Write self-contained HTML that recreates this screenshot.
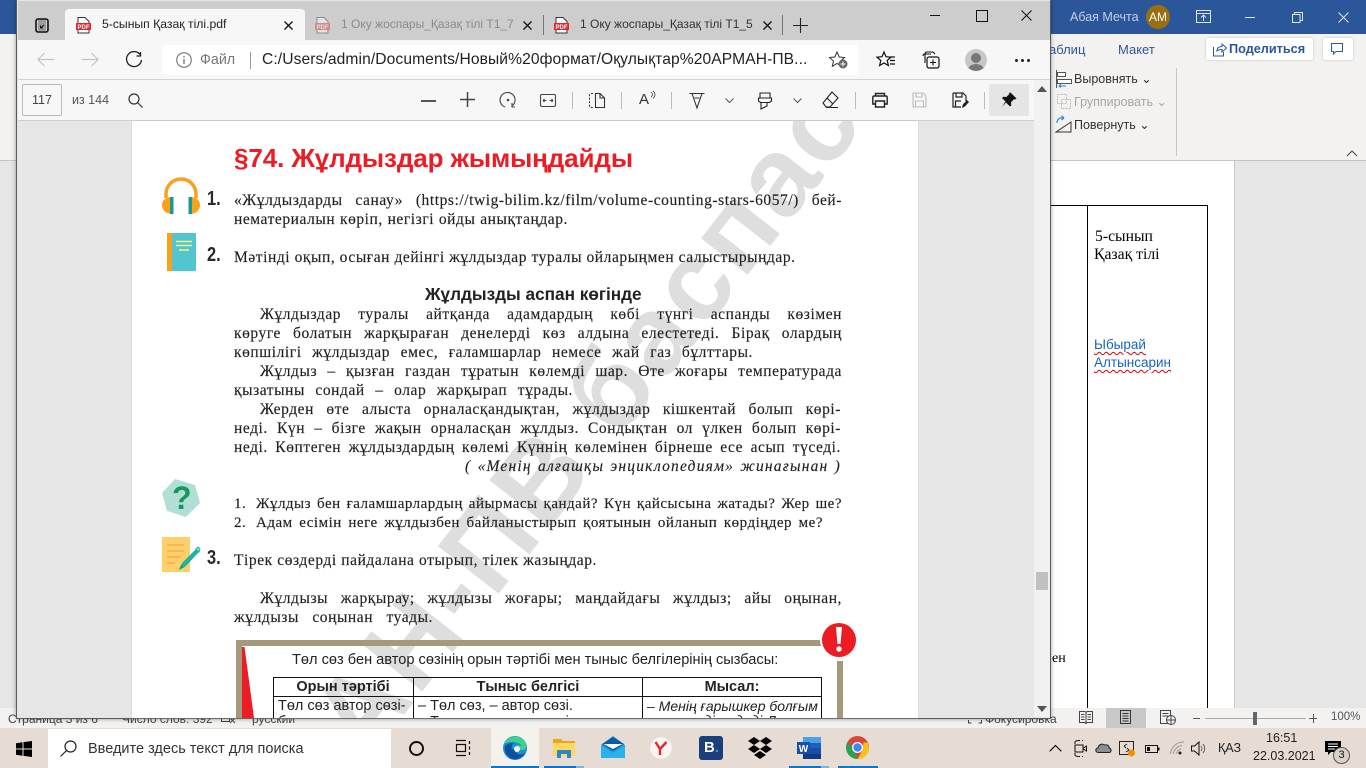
<!DOCTYPE html>
<html><head><meta charset="utf-8">
<style>
html,body{margin:0;padding:0}
body{position:relative;width:1366px;height:768px;overflow:hidden;background:#e6e6e6;font-family:"Liberation Sans",sans-serif}
.a{position:absolute}
.t{position:absolute;white-space:nowrap}
svg{position:absolute;overflow:visible}
.l{position:absolute;white-space:nowrap;font-family:"Liberation Serif",serif;font-size:15.5px;letter-spacing:.56px;line-height:19px;height:19px;margin-top:-1px;color:#231f20;text-align:justify;text-align-last:justify;-webkit-text-stroke:.15px #231f20}
.m{font-size:15px;letter-spacing:.5px;margin-top:0}
.n{position:absolute;font-family:"Liberation Sans",sans-serif;font-weight:bold;font-size:20px;color:#2a2a2a;line-height:22px;transform:scaleX(.82);transform-origin:left}
.c{position:absolute;font-size:14.5px;line-height:18px;color:#222;white-space:nowrap}
</style></head><body>

<!-- WORD behind -->
<div class="a" style="left:0;top:0;width:1366px;height:34px;background:#2b579a"></div>
<div class="a" style="left:0;top:34px;width:1366px;height:126px;background:#f3f2f1"></div>
<div class="a" style="left:0;top:160px;width:1366px;height:1px;background:#c6c6c6"></div>
<div class="a" style="left:1050px;top:161px;width:184px;height:547px;background:#fff"></div>
<div class="a" style="left:1050px;top:205px;width:158px;height:1px;background:#000"></div>
<div class="a" style="left:1087px;top:205px;width:1px;height:503px;background:#000"></div>
<div class="a" style="left:1207px;top:205px;width:1px;height:503px;background:#000"></div>
<div class="t" style="left:1095px;top:227px;font:15.7px/19px 'Liberation Serif',serif;color:#000">5-сынып</div>
<div class="t" style="left:1094px;top:245px;font:15.7px/19px 'Liberation Serif',serif;color:#000">Қазақ тілі</div>
<div class="t" style="left:1094px;top:336px;font:13.5px/18px 'Liberation Sans',sans-serif;color:#1565c0;text-decoration:underline wavy #d00 1px;text-underline-offset:2px">Ыбырай</div>
<div class="t" style="left:1094px;top:354px;font:13.5px/18px 'Liberation Sans',sans-serif;color:#1565c0;text-decoration:underline wavy #d00 1px;text-underline-offset:2px">Алтынсарин</div>
<div class="t" style="left:1052px;top:650px;font:14px/18px 'Liberation Serif',serif;color:#000">ен</div>

<div class="t" style="left:1070px;top:10px;font-size:12.5px;color:#c3d0e6">Абая Мечта</div>
<div class="a" style="left:1146px;top:5px;width:24px;height:24px;border-radius:50%;background:#9a6f10;color:#fff;font-size:12px;line-height:24px;text-align:center">AM</div>
<svg style="left:1196px;top:10px" width="16" height="14"><rect x=".5" y=".5" width="14" height="12" fill="none" stroke="#dbe4f2"/><path d="M.5 3.5h14M7.5 11V5.500M5 7.500l2.500-2.500L10 7.500" fill="none" stroke="#dbe4f2"/></svg>
<div class="a" style="left:1245px;top:17px;width:10px;height:1px;background:#dbe4f2"></div>
<svg style="left:1292px;top:12px" width="11" height="11"><path d="M.5 2.500h7.500v8H.5zM2.500 2.500V.5h8v8H8" fill="none" stroke="#dbe4f2"/></svg>
<svg style="left:1338px;top:12px" width="11" height="11"><path d="M.5.5l10 10M10.500.5l-10 10" stroke="#dbe4f2"/></svg>

<div class="t" style="left:1049px;top:42px;font-size:13px;color:#2b579a">аблиц</div>
<div class="t" style="left:1118px;top:42px;font-size:13px;color:#2b579a">Макет</div>
<div class="a" style="left:1206px;top:38px;width:107px;height:22px;background:#fff;box-shadow:0 0 2px #bbb;border-radius:2px"></div>
<svg style="left:1212px;top:42px" width="16" height="15"><path d="M1.500 5v9h10V10M5 9c0-3 2-4.500 5-4.500V2l4.500 4L10 10V7.500C7.500 7.500 6 8 5 9z" fill="none" stroke="#2b579a"/></svg>
<div class="t" style="left:1229px;top:42px;font-size:12.700px;font-weight:bold;color:#2b579a">Поделиться</div>
<div class="a" style="left:1323px;top:38px;width:30px;height:22px;background:#fff;box-shadow:0 0 2px #bbb;border-radius:2px"></div>
<svg style="left:1331px;top:43px" width="14" height="14"><path d="M.5.5h11v8H5L2.500 11V8.500h-2z" fill="none" stroke="#2b579a"/></svg>

<svg style="left:1055px;top:70px" width="18" height="18"><path d="M1.500 0v18" stroke="#555"/><rect x="2.500" y="2.500" width="8" height="4" fill="#fff" stroke="#555"/><rect x="2.500" y="9.500" width="14" height="4" fill="#fff" stroke="#555"/><path d="M11 16H4l2-2M4 16l2 1.500" fill="none" stroke="#2b88d8"/></svg>
<div class="t" style="left:1074px;top:71px;font-size:12.500px;color:#333">Выровнять ⌄</div>
<svg style="left:1056px;top:93px" width="16" height="17"><rect x="1.500" y="1.500" width="9" height="9" fill="none" stroke="#bbb" stroke-dasharray="2 1"/><rect x="5.500" y="6.500" width="9" height="9" fill="none" stroke="#bbb" stroke-dasharray="2 1"/></svg>
<div class="t" style="left:1074px;top:94px;font-size:12.500px;color:#a6a6a6">Группировать ⌄</div>
<svg style="left:1055px;top:115px" width="18" height="18"><path d="M1 17L16 7v10z" fill="none" stroke="#333"/><path d="M2 8c0-4 3-6 7-5M9 3L6.500.5M9 3L6.500 5" fill="none" stroke="#2b88d8" stroke-width="1.200"/></svg>
<div class="t" style="left:1074px;top:117px;font-size:12.500px;color:#333">Повернуть ⌄</div>
<div class="a" style="left:1176px;top:68px;width:1px;height:88px;background:#c8c6c4"></div>
<svg style="left:1346px;top:150px" width="12" height="7"><path d="M1 6l5-5 5 5" fill="none" stroke="#444"/></svg>
<div class="a" style="left:1234px;top:161px;width:1px;height:547px;background:#c8c8c8"></div>

<!-- Word status -->
<div class="a" style="left:0;top:708px;width:1366px;height:20px;background:#f3f2f1"></div>
<div class="t" style="left:8px;top:712px;font-size:12px;color:#444">Страница 3 из 6</div>
<div class="t" style="left:122px;top:712px;font-size:12px;color:#444">Число слов: 392</div>
<svg style="left:221px;top:712px" width="15" height="12"><rect x=".5" y=".5" width="8" height="9" fill="none" stroke="#444"/><path d="M9 6l5 5M14 6l-5 5" stroke="#444"/></svg>
<div class="t" style="left:252px;top:712px;font-size:12px;color:#444">русский</div>
<svg style="left:968px;top:712px" width="14" height="12"><path d="M.5 3V.5h3M10.500.5h3V3M.5 8v3h3M13.500 8v3h-3" fill="none" stroke="#444"/></svg>
<div class="t" style="left:985px;top:712px;font-size:12px;color:#444">Фокусировка</div>
<div class="a" style="left:1106px;top:708px;width:40px;height:20px;background:#c8c8c8"></div>
<svg style="left:1079px;top:710px" width="14" height="14"><path d="M.5 1.500h5.500l1 1 1-1h5.500v11H8l-1 1-1-1H.5zM7 2.500v10M2 4.500h3.500M2 7h3.500M2 9.500h3.500M8.500 4.500H12M8.500 7H12M8.500 9.500H12" fill="none" stroke="#444"/></svg>
<svg style="left:1120px;top:710px" width="11" height="14"><path d="M.5.500h10v13H.5zM2.500 3.500h6M2.500 6h6M2.500 8.500h6M2.500 11h6" fill="none" stroke="#333"/></svg>
<svg style="left:1160px;top:710px" width="16" height="15"><path d="M.5.500h10v13H.5zM2.500 3.500h6M2.500 6h6" fill="none" stroke="#444"/><circle cx="11" cy="10" r="4.500" fill="#f3f2f1" stroke="#444"/><path d="M6.500 10h9M11 5.500v9" stroke="#444"/></svg>
<div class="a" style="left:1193px;top:718px;width:7px;height:1px;background:#555"></div>
<div class="a" style="left:1205px;top:718px;width:101px;height:1px;background:#aaa"></div>
<div class="a" style="left:1253px;top:712px;width:4px;height:13px;background:#666"></div>
<div class="a" style="left:1309px;top:718px;width:8px;height:1px;background:#555"></div>
<div class="a" style="left:1313px;top:714px;width:1px;height:9px;background:#555"></div>
<div class="t" style="left:1331px;top:711px;font-size:11.500px;color:#555">100%</div>

<!-- Taskbar -->
<div class="a" style="left:0;top:728px;width:1366px;height:40px;background:#e7dcd4"></div>
<svg style="left:16px;top:741px" width="16" height="16"><path d="M0 2.200L6.500 1.300V7.500H0zM7.500 1.100L16 0V7.500H7.500zM0 8.500H6.500V14.700L0 13.800zM7.500 8.500H16V16L7.500 14.900z" fill="#000"/></svg>
<div class="a" style="left:48px;top:729px;width:343px;height:39px;background:#fff"></div>
<svg style="left:60px;top:740px" width="17" height="17"><circle cx="10.500" cy="6.500" r="5.500" fill="none" stroke="#222" stroke-width="1.200"/><path d="M6.500 10.500L.5 16.500" stroke="#222" stroke-width="1.200"/></svg>
<div class="t" style="left:88px;top:741px;font-size:14.500px;color:#333">Введите здесь текст для поиска</div>
<div class="a" style="left:409px;top:741px;width:11px;height:11px;border:2.500px solid #111;border-radius:50%"></div>
<svg style="left:455px;top:740px" width="17" height="16"><path d="M1 .5h10M1 15.500h10M1.500 4.500h9v7h-9zM14.500 1v3M14.500 6.500v3M14.500 12v3" fill="none" stroke="#111" stroke-width="1.200"/></svg>
<div class="a" style="left:491px;top:728px;width:48px;height:40px;background:#f5f1ed"></div>
<div class="a" style="left:491px;top:766px;width:48px;height:2px;background:#0078d7"></div>
<div class="a" style="left:544px;top:766px;width:40px;height:2px;background:#0078d7"></div>
<div class="a" style="left:576px;top:766px;width:8px;height:2px;background:#76b5e6"></div>
<div class="a" style="left:789px;top:766px;width:32px;height:2px;background:#0078d7"></div>
<div class="a" style="left:821px;top:766px;width:8px;height:2px;background:#76b5e6"></div>
<div class="a" style="left:838px;top:766px;width:40px;height:2px;background:#0078d7"></div>
<!-- edge -->
<svg style="left:503px;top:736px" width="24" height="24"><circle cx="12" cy="12" r="12" fill="#1a8fd6"/><path d="M1 8C4 0 15-2 21 4c3 3 3 9 0 10H10c0-4 6-6 9-4-2-4-12-6-18-2z" fill="#3fcf8e"/><path d="M12 13c0 5 5 7 10 4-3 5-8 7-12 6-7-2-9-9-8-13 1 0 3-4 9-3-2 1-3 3-2 6z" fill="#0f4f9e"/><circle cx="14" cy="13" r="3" fill="#f5f1ed"/></svg>
<!-- explorer -->
<svg style="left:553px;top:738px" width="22" height="20"><path d="M0 1h8l2 2h12v4H0z" fill="#e6a817"/><rect y="5" width="22" height="13" fill="#ffd766"/><path d="M4 12h14v8h-4v-4H8v4H4z" fill="#2f86c9"/></svg>
<!-- mail -->
<svg style="left:601px;top:736px" width="24" height="24"><path d="M0 9L12 0l12 9v13H0z" fill="#1b9ad9"/><path d="M1 8L12 1l11 7-11 7z" fill="#0b5ca8"/><path d="M2.500 8h19L12 13z" fill="#fff"/><path d="M0 9l12 8 12-8v13H0z" fill="#28b3ec"/></svg>
<!-- yandex -->
<svg style="left:650px;top:737px" width="22" height="22"><circle cx="11" cy="11" r="11" fill="#f8f5f3" stroke="#ddd" stroke-width=".5"/><path d="M5.500 5l4.500 7v6M16.500 5L10 12" fill="none" stroke="#e8232a" stroke-width="2.400"/></svg>
<!-- B -->
<div class="a" style="left:699px;top:736px;width:24px;height:24px;background:#1c3f7c;border-radius:3px;color:#fff;font-weight:bold;font-size:15px;line-height:24px;padding-left:5px;box-sizing:border-box">B<span style="color:#1fa0e0">.</span></div>
<!-- dropbox -->
<svg style="left:748px;top:737px" width="24" height="22"><path d="M6 0l6 4-6 4-6-4zM18 0l6 4-6 4-6-4zM6 8l6 4-6 4-6-4zM18 8l6 4-6 4-6-4zM12 14l6 4-6 4-6-4z" fill="#000"/></svg>
<!-- word -->
<svg style="left:797px;top:736px" width="24" height="24"><rect x="6" y="1" width="18" height="22" fill="#1f5fbf"/><rect x="6" y="1" width="18" height="6" fill="#4aa0ea"/><rect x="6" y="12" width="18" height="6" fill="#1a4da3"/><rect x="6" y="18" width="18" height="5" fill="#123a82"/><rect y="6" width="13" height="12" fill="#174ea6"/><text x="6.500" y="16" text-anchor="middle" font-size="10" font-weight="bold" fill="#fff" font-family="Liberation Sans">W</text></svg>
<!-- chrome -->
<svg style="left:846px;top:736px" width="23" height="23"><circle cx="11.500" cy="11.500" r="11.500" fill="#db4437"/><path d="M11.500 23A11.500 11.500 0 0 1 1.500 6l6 5.500 4 11.500z" fill="#2ba24c"/><path d="M23 11.500A11.500 11.500 0 0 1 11.500 23l5-9 1-7.500h4z" fill="#fbc116"/><circle cx="11.500" cy="11.500" r="5.500" fill="#fff"/><circle cx="11.500" cy="11.500" r="4.200" fill="#4285f4"/></svg>

<!-- tray -->
<svg style="left:1049px;top:744px" width="13" height="8"><path d="M.7 7.300L6.500 1.500l5.800 5.800" fill="none" stroke="#111" stroke-width="1.200"/></svg>
<svg style="left:1074px;top:740px" width="14" height="17"><path d="M1 4v-2q0-1.500 5-1.500M1 13v2q0 1.500 5 1.500M8 0.500h1M8 16.500h1" fill="none" stroke="#111"/><rect x="1" y="5" width="8" height="7" fill="none" stroke="#111"/><path d="M9.500 8l3-2v5l-3-2" fill="none" stroke="#111"/></svg>
<svg style="left:1095px;top:741px" width="17" height="12"><path d="M3.500 11.500C0 11.500 0 7 3 7c0-3 4-5 6.500-3 3-1 5 1 4.500 3 3 .5 2.500 4.500 0 4.500z" fill="#8e8e8e" stroke="#222"/></svg>
<svg style="left:1119px;top:740px" width="16" height="17"><rect x=".5" y="1.500" width="14" height="13" fill="none" stroke="#222"/><path d="M5 6l3-2M5 6l2 2M10 10l-3 2M10 10l-2-2" stroke="#222" fill="none"/><circle cx="12.500" cy="13" r="3.500" fill="#f39000"/></svg>
<svg style="left:1145px;top:745px" width="15" height="8"><rect x=".5" y=".5" width="12" height="7" fill="none" stroke="#111"/><rect x="2" y="2" width="3" height="4" fill="#111"/><rect x="13" y="2.500" width="1.500" height="3" fill="#111"/></svg>
<svg style="left:1170px;top:741px" width="16" height="14"><path d="M.5 13A13 13 0 0 1 14 1M3.500 13A9.500 9.500 0 0 1 12 4.500M6.500 13A6 6 0 0 1 11 8" fill="none" stroke="#999"/><circle cx="10" cy="12" r="1.500" fill="#222"/></svg>
<svg style="left:1191px;top:741px" width="16" height="15"><path d="M.5 5h3L8 1v13L3.500 10h-3z" fill="none" stroke="#111"/><path d="M10 5a4 4 0 0 1 0 5M12 3a7 7 0 0 1 0 9" fill="none" stroke="#666"/></svg>
<div class="t" style="left:1218px;top:741px;font-size:12.500px;color:#222">ҚАЗ</div>
<div class="t" style="left:1266px;top:731px;font-size:12.500px;color:#222">16:51</div>
<div class="t" style="left:1253px;top:749px;font-size:12.500px;color:#222">22.03.2021</div>
<svg style="left:1325px;top:741px" width="16" height="14"><path d="M0 0h16v11H6l-3 3v-3H0z" fill="#000"/><path d="M3 3h10M3 5.500h10M3 8h7" stroke="#fff"/></svg>
<div class="a" style="left:1333px;top:747px;width:15px;height:15px;border-radius:50%;background:#d8d2ca;border:1px solid #555;font-size:11px;line-height:15px;text-align:center;color:#111">3</div>

<!-- EDGE WINDOW -->
<div class="a" style="left:17px;top:0;width:1033px;height:718px;background:#e6e6e6;box-shadow:0 0 5px rgba(0,0,0,.55);outline:1px solid #5a5a5a"></div>
<div class="a" style="left:18px;top:1px;width:1032px;height:39px;background:#cdcdcd"></div>
<div class="a" style="left:18px;top:40px;width:1032px;height:40px;background:#f7f7f7;border-bottom:1px solid #d4d4d4;box-sizing:border-box"></div>
<div class="a" style="left:18px;top:80px;width:1032px;height:41px;background:#f7f7f7;border-bottom:1px solid #cfcfcf;box-sizing:border-box"></div>

<!-- tabs -->
<svg style="left:35px;top:18px" width="14" height="14"><rect x="1" y="1" width="12" height="13" rx="2" fill="none" stroke="#111" stroke-width="1.600"/><rect x="3" y="1" width="8" height="12" fill="#111" opacity=".25"/><path d="M9 7L5.500 10M5.500 10h2.500M5.500 10V7.500" stroke="#111" fill="none"/></svg>
<div class="a" style="left:65px;top:9px;width:240px;height:31px;background:#f7f7f7;border-radius:4px 4px 0 0"></div>
<svg style="left:76px;top:17px" width="15" height="17"><path d="M2 .5h7l4 4V16H2z" fill="#fff" stroke="#333"/><rect y="6" width="15" height="7" fill="#e8232a"/><text x="7.500" y="12" text-anchor="middle" font-size="6" font-weight="bold" fill="#fff" font-family="Liberation Sans">PDF</text></svg>
<div class="t" style="left:102px;top:17px;font-size:12.200px;color:#222">5-сынып Қазақ тілі.pdf</div>
<svg style="left:284px;top:21px" width="9" height="9"><path d="M.5.5l8 8M8.500.5l-8 8" stroke="#111" stroke-width="1.300"/></svg>
<svg style="left:315px;top:17px;opacity:.42" width="15" height="17"><path d="M2 .5h7l4 4V16H2z" fill="#fff" stroke="#333"/><rect y="6" width="15" height="7" fill="#e8232a"/><text x="7.500" y="12" text-anchor="middle" font-size="6" font-weight="bold" fill="#fff" font-family="Liberation Sans">PDF</text></svg>
<div class="t" style="left:341px;top:17px;font-size:12px;color:#8a8a8a;width:175px;overflow:hidden">1 Оку жоспары_Қазақ тілі Т1_7</div>
<svg style="left:523px;top:21px" width="9" height="9"><path d="M.5.5l8 8M8.500.5l-8 8" stroke="#111" stroke-width="1.300"/></svg>
<div class="a" style="left:543px;top:15px;width:1px;height:20px;background:#777"></div>
<svg style="left:554px;top:17px" width="15" height="17"><path d="M2 .5h7l4 4V16H2z" fill="#fff" stroke="#333"/><rect y="6" width="15" height="7" fill="#e8232a"/><text x="7.500" y="12" text-anchor="middle" font-size="6" font-weight="bold" fill="#fff" font-family="Liberation Sans">PDF</text></svg>
<div class="t" style="left:580px;top:17px;font-size:12px;color:#333;width:175px;overflow:hidden">1 Оку жоспары_Қазақ тілі Т1_5</div>
<svg style="left:763px;top:21px" width="9" height="9"><path d="M.5.5l8 8M8.500.5l-8 8" stroke="#111" stroke-width="1.300"/></svg>
<div class="a" style="left:782px;top:15px;width:1px;height:20px;background:#777"></div>
<svg style="left:793px;top:18px" width="15" height="15"><path d="M7.500 0v15M0 7.500h15" stroke="#222" stroke-width="1.100"/></svg>
<div class="a" style="left:930px;top:15px;width:10px;height:1px;background:#111"></div>
<div class="a" style="left:976px;top:10px;width:10px;height:10px;border:1px solid #111"></div>
<svg style="left:1021px;top:10px" width="11" height="11"><path d="M.5.500l10 10M10.500.500l-10 10" stroke="#111"/></svg>

<!-- address row -->
<svg style="left:37px;top:52px" width="18" height="15"><path d="M17 7.500H1M7.500 1L1 7.500 7.500 14" fill="none" stroke="#c4c4c4" stroke-width="1.200"/></svg>
<svg style="left:81px;top:52px" width="18" height="15"><path d="M1 7.500h16M10.500 1L17 7.500 10.500 14" fill="none" stroke="#c4c4c4" stroke-width="1.200"/></svg>
<svg style="left:125px;top:51px" width="18" height="18"><path d="M15 3.500A7.500 7.500 0 1 0 16.500 9M15.500 1v4h-4" fill="none" stroke="#222" stroke-width="1.300"/></svg>
<div class="a" style="left:162px;top:45px;width:696px;height:30px;background:#fff;border-radius:4px"></div>
<svg style="left:176px;top:52px" width="16" height="16"><circle cx="8" cy="8" r="7.300" fill="none" stroke="#666"/><path d="M8 7v5M8 4v1.500" stroke="#666" stroke-width="1.200"/></svg>
<div class="t" style="left:200px;top:52px;font-size:14.3px;color:#777">Файл</div>
<div class="a" style="left:250px;top:52px;width:1px;height:17px;background:#999"></div>
<div class="t" style="left:262px;top:51px;font-size:15.6px;color:#222;letter-spacing:.1px">C:/Users/admin/Documents/Новый%20формат/Оқулықтар%20АРМАН-ПВ...</div>
<svg style="left:829px;top:51px" width="19" height="18"><path d="M8 1l2.200 5 5.300.5-4 3.500 1.200 5.300L8 12.500l-4.700 2.800L4.500 10 .5 6.500 5.800 6z" fill="none" stroke="#333"/><circle cx="14" cy="13" r="4.500" fill="#666"/><path d="M11.500 13h5M14 10.500v5" stroke="#fff"/></svg>
<svg style="left:877px;top:51px" width="19" height="17"><path d="M7 1l2 4.700 5 .5-3.800 3.300 1.200 5L7 12l-4.400 2.500 1.200-5L0 6.200l5-.5z" fill="none" stroke="#111" stroke-width="1.200"/><path d="M13 6h5M13 9.500h5M13 13h5" stroke="#111" stroke-width="1.200"/></svg>
<svg style="left:922px;top:51px" width="18" height="18"><path d="M3 12V3q0-2 2-2h6l2 2" fill="none" stroke="#111" stroke-width="1.100"/><path d="M1 5q0-2 2-2h6" fill="none" stroke="#111" stroke-width="1.100"/><rect x="5" y="6" width="12" height="11" rx="2" fill="#f7f7f7" stroke="#111" stroke-width="1.200"/><path d="M11 8.500v6M8 11.500h6" stroke="#111" stroke-width="1.100"/></svg>
<div class="a" style="left:965px;top:49px;width:22px;height:22px;border-radius:50%;background:#c9c7c6;overflow:hidden"><div class="a" style="left:6px;top:4px;width:10px;height:10px;border-radius:50%;background:#777"></div><div class="a" style="left:3px;top:15px;width:16px;height:12px;border-radius:50%;background:#777"></div></div>
<div class="a" style="left:1015px;top:59px;width:3px;height:3px;background:#222;border-radius:50%;box-shadow:6px 0 0 #222,12px 0 0 #222"></div>

<!-- pdf toolbar -->
<div class="a" style="left:22px;top:84px;width:40px;height:32px;background:#f7f7f7;border:1px solid #bbb;box-sizing:border-box;border-radius:2px;font-size:12.500px;line-height:30px;text-align:center;color:#444">117</div>
<div class="t" style="left:72px;top:93px;font-size:12.500px;color:#555">из 144</div>
<svg style="left:128px;top:93px" width="15" height="15"><circle cx="6" cy="6" r="5" fill="none" stroke="#333" stroke-width="1.200"/><path d="M10 10l4.500 4.500" stroke="#333" stroke-width="1.200"/></svg>
<div class="a" style="left:421px;top:100px;width:15px;height:1.500px;background:#555"></div>
<svg style="left:460px;top:92px" width="15" height="15"><path d="M7.500 0v15M0 7.500h15" stroke="#444" stroke-width="1.500"/></svg>
<svg style="left:500px;top:92px" width="16" height="17"><path d="M5 15A7.500 7.500 0 1 1 12 14M12 11v4h3" fill="none" stroke="#444" stroke-width="1.100"/><circle cx="8" cy="8" r="1.300" fill="#444"/></svg>
<svg style="left:540px;top:94px" width="16" height="13"><rect x=".5" y=".5" width="15" height="12" rx="1.500" fill="none" stroke="#444" stroke-width="1.100"/><path d="M3 6.500h3.500M3 6.500l1.500-1.500M3 6.500L4.500 8M13 6.500H9.500M13 6.500L11.500 5M13 6.500L11.500 8" stroke="#444" fill="none"/></svg>
<div class="a" style="left:572px;top:92px;width:1px;height:17px;background:#bbb"></div>
<svg style="left:589px;top:93px" width="16" height="15"><path d="M4 .5H2Q.5.500.5 2v11q0 1.500 1.500 1.500h2" fill="none" stroke="#333" stroke-dasharray="2 1.500"/><path d="M6.500.5H11l4.500 4.500v9.500h-9zM11 .5v4.500h4.500" fill="none" stroke="#333" stroke-width="1.100"/></svg>
<div class="a" style="left:621px;top:92px;width:1px;height:17px;background:#bbb"></div>
<div class="t" style="left:639px;top:91px;font-size:15px;color:#333">A</div>
<svg style="left:650px;top:91px" width="6" height="9"><path d="M1 1q3 2.500 0 5M3 0q4 3.500 0 7.500" fill="none" stroke="#333" stroke-width=".8"/></svg>
<div class="a" style="left:671px;top:92px;width:1px;height:17px;background:#bbb"></div>
<svg style="left:689px;top:92px" width="16" height="17"><path d="M.5 1.500h15M3 1.500L8 16l5-14.500M5.500 6h5" fill="none" stroke="#333" stroke-width="1.100"/></svg>
<svg style="left:725px;top:98px" width="9" height="6"><path d="M.5.5l4 4 4-4" fill="none" stroke="#555"/></svg>
<svg style="left:757px;top:92px" width="16" height="18"><path d="M3 1h10v5H3zM1.500 6h13v3l-2 1.500H3.500L1.500 9zM4 10.500V17l6-3v-3.500" fill="none" stroke="#222" stroke-width="1.100"/></svg>
<svg style="left:793px;top:98px" width="9" height="6"><path d="M.5.5l4 4 4-4" fill="none" stroke="#555"/></svg>
<svg style="left:822px;top:91px" width="17" height="18"><path d="M10 1l6 6-8 9H4L1 12z" fill="none" stroke="#222" stroke-width="1.100"/><path d="M5 7l6 6M4 16.500h12" stroke="#222" stroke-width="1.100"/></svg>
<div class="a" style="left:855px;top:92px;width:1px;height:17px;background:#bbb"></div>
<svg style="left:872px;top:92px" width="16" height="16"><path d="M3.500 4V1.500h9V4M3.500 12H.8V5.500q0-1.500 1.500-1.500h11.400q1.500 0 1.500 1.500V12h-2.700M3.500 9h9v6h-9z" fill="none" stroke="#222" stroke-width="1.400"/></svg>
<svg style="left:912px;top:92px" width="15" height="16"><path d="M1 1h10l3 3v11H1zM4 1v4h6V1M3.500 15V9h8v6" fill="none" stroke="#bbb" stroke-width="1.100"/></svg>
<svg style="left:952px;top:92px" width="17" height="17"><path d="M1 1h10l3 3v5M9 15H1V1M4 1v4h6V1M3.500 15V9H9" fill="none" stroke="#222" stroke-width="1.200"/><path d="M10 16l.8-3.500L15 8l2 2-4 4.500z" fill="#222"/></svg>
<div class="a" style="left:984px;top:92px;width:1px;height:17px;background:#bbb"></div>
<div class="a" style="left:989px;top:84px;width:40px;height:32px;background:#e5e5e5;border-radius:2px"></div>
<svg style="left:1001px;top:92px" width="16" height="16"><path d="M9.500 .5l6 6-1.500 1-1-.3-3 3 .3 3-1.300 1.300L5 10.500l-4 4.500 3.500-5.500L1 6l1.300-1.300 3 .3 3-3-.3-1z" fill="#111"/></svg>

<!-- PAGE -->
<div class="a" style="left:132px;top:121px;width:786px;height:597px;background:#fff;overflow:hidden;box-shadow:0 0 1px #bbb">
  <div class="a" style="left:204px;top:563px;transform:rotate(-52deg);transform-origin:left center;font-family:'Liberation Sans',sans-serif;font-weight:bold;font-size:112px;line-height:112px;color:#dedede;white-space:nowrap;letter-spacing:3px">АН-ПВ баспасы</div>
</div>

<!-- page contents, absolute page coords -->
<div class="t" style="left:234px;top:144px;font-size:26px;line-height:28px;font-weight:bold;color:#ed1c24;letter-spacing:-.1px">§74. Жұлдыздар жымыңдайды</div>

<svg style="left:162px;top:176px" width="38" height="38"><path d="M4 22V18a15 15 0 0 1 30 0v4" fill="none" stroke="#f9a11b" stroke-width="3.500"/><path d="M10 21v17C4 38 0 34 0 29s4-8 10-8zM28 21v17c6 0 10-4 10-9s-4-8-10-8z" fill="#f9a11b"/><rect x="8" y="21" width="3.500" height="17" fill="#199a90"/><rect x="26.500" y="21" width="3.500" height="17" fill="#199a90"/><rect x="11.500" y="21" width="1.500" height="17" fill="#fff"/><rect x="25" y="21" width="1.500" height="17" fill="#fff"/></svg>
<div class="n" style="left:207px;top:188px">1.</div>
<svg style="left:167px;top:233px" width="29" height="38"><rect width="5" height="38" fill="#f9a11b"/><rect x="5" width="24" height="38" fill="#52c5d0"/><path d="M9 8.500h16M9 12.500h16" stroke="#f5f28a" stroke-width="1.600"/><path d="M12 17h10" stroke="#f5f28a" stroke-width="1.600"/></svg>
<div class="n" style="left:207px;top:244px">2.</div>

<div class="l" style="left:234px;top:192px;width:608px">«Жұлдыздарды санау» (https://twig-bilim.kz/film/volume-counting-stars-6057/) бей-</div>
<div class="l" style="left:234px;top:211px;width:334px">нематериалын көріп, негізгі ойды анықтаңдар.</div>
<div class="l" style="left:234px;top:249px;width:561px">Мәтінді оқып, осыған дейінгі жұлдыздар туралы ойларыңмен салыстырыңдар.</div>
<div class="t" style="left:425px;top:285px;font-size:17.2px;line-height:19px;font-weight:bold;color:#222">Жұлдызды аспан көгінде</div>
<div class="l" style="left:260px;top:306px;width:582px">Жұлдыздар туралы айтқанда адамдардың көбі түнгі аспанды көзімен</div>
<div class="l" style="left:234px;top:325px;width:608px">көруге болатын жарқыраған денелерді көз алдына елестетеді. Бірақ олардың</div>
<div class="l" style="left:234px;top:344px;width:519px">көпшілігі жұлдыздар емес, ғаламшарлар немесе жай газ бұлттары.</div>
<div class="l" style="left:260px;top:363px;width:582px">Жұлдыз – қызған газдан тұратын көлемді шар. Өте жоғары температурада</div>
<div class="l" style="left:234px;top:382px;width:339px">қызатыны сондай – олар жарқырап тұрады.</div>
<div class="l" style="left:260px;top:401px;width:581px">Жерден өте алыста орналасқандықтан, жұлдыздар кішкентай болып көрі-</div>
<div class="l" style="left:234px;top:420px;width:607px">неді. Күн – бізге жақын орналасқан жұлдыз. Сондықтан ол үлкен болып көрі-</div>
<div class="l" style="left:234px;top:439px;width:607px">неді. Көптеген жұлдыздардың көлемі Күннің көлемінен бірнеше есе асып түседі.</div>
<div class="l" style="left:465px;top:458px;width:376px;font-style:italic;letter-spacing:1.2px">( «Менің алғашқы энциклопедиям» жинағынан )</div>

<svg style="left:162px;top:479px" width="38" height="38"><path d="M13 0L33 6 38 24 24 38 5 32 0 14z" fill="#b2dfd5"/></svg>
<div class="t" style="left:172px;top:481px;font-size:32px;line-height:34px;font-weight:bold;color:#14985c">?</div>
<div class="l m" style="left:234px;top:495px;text-align:left;text-align-last:left">1.</div>
<div class="l m" style="left:256px;top:495px;width:586px">Жұлдыз бен ғаламшарлардың айырмасы қандай? Күн қайсысына жатады? Жер ше?</div>
<div class="l m" style="left:234px;top:514px;text-align:left;text-align-last:left">2.</div>
<div class="l m" style="left:256px;top:514px;width:567px">Адам есімін неге жұлдызбен байланыстырып қоятынын ойланып көрдіңдер ме?</div>

<svg style="left:162px;top:537px" width="38" height="35"><rect width="28" height="35" fill="#ffcf6a"/><path d="M5 8h17M5 14h17M5 20h14M5 26h8" stroke="#f6a343" stroke-width="1.200"/><path d="M17 33l3-7L34 12l3 3L23 30z" fill="#1fb3a3"/><path d="M34 12l2-2 2 2-1 3z" fill="#7fd" stroke="#1fb3a3"/><path d="M17 33l2-5 2.500 2z" fill="#0a5"/></svg>
<div class="n" style="left:207px;top:547px">3.</div>
<div class="l" style="left:234px;top:552px;width:363px">Тірек сөздерді пайдалана отырып, тілек жазыңдар.</div>
<div class="l" style="left:260px;top:590px;width:582px">Жұлдызы жарқырау; жұлдызы жоғары; маңдайдағы жұлдыз; айы оңынан,</div>
<div class="l" style="left:234px;top:609px;width:199px">жұлдызы соңынан туады.</div>

<!-- frame box -->
<div class="a" style="left:236px;top:640px;width:586px;height:6px;background:#a6987a"></div>
<div class="a" style="left:236px;top:640px;width:6px;height:78px;background:#a6987a"></div>
<div class="a" style="left:837px;top:661px;width:6px;height:57px;background:#a6987a"></div>
<svg style="left:242px;top:647px" width="14" height="71"><path d="M0 0h2.500L12 71H0z" fill="#ed1c24"/></svg>
<div class="a" style="left:820px;top:621px;width:38px;height:38px;border-radius:50%;background:#fff"></div>
<div class="a" style="left:822px;top:623px;width:34px;height:34px;border-radius:50%;background:#ed1c24"></div>
<svg style="left:835px;top:627px" width="8" height="26"><path d="M1 0h6L5.500 17h-3z" fill="#fff"/><circle cx="4" cy="22" r="2.700" fill="#fff"/></svg>
<div class="t" style="left:292px;top:651px;font-size:14.6px;line-height:18px;color:#222">Төл сөз бен автор сөзінің орын тәртібі мен тыныс белгілерінің сызбасы:</div>
<div class="a" style="left:273px;top:677px;width:549px;height:41px;overflow:hidden">
  <div class="a" style="left:0;top:0;width:549px;height:1px;background:#111"></div>
  <div class="a" style="left:0;top:19px;width:549px;height:1px;background:#111"></div>
  <div class="a" style="left:0;top:0;width:1px;height:41px;background:#111"></div>
  <div class="a" style="left:140px;top:0;width:1px;height:41px;background:#111"></div>
  <div class="a" style="left:369px;top:0;width:1px;height:41px;background:#111"></div>
  <div class="a" style="left:548px;top:0;width:1px;height:41px;background:#111"></div>
  <div class="c" style="left:0;top:1px;width:140px;text-align:center;font-weight:bold">Орын тәртібі</div>
  <div class="c" style="left:141px;top:1px;width:228px;text-align:center;font-weight:bold">Тыныс белгісі</div>
  <div class="c" style="left:370px;top:1px;width:178px;text-align:center;font-weight:bold">Мысал:</div>
  <div class="c" style="left:5px;top:20px">Төл сөз автор сөзі-</div>
  <div class="c" style="left:5px;top:36px">бен</div>
  <div class="c" style="left:145px;top:20px">– Төл сөз, – автор сөзі.</div>
  <div class="c" style="left:145px;top:36px">– Төл сөз, – автор сөзі</div>
  <div class="c" style="left:374px;top:20px;font-style:italic;font-size:14px">– Менің ғарышкер болғым</div>
  <div class="c" style="left:400px;top:36px;font-style:italic">келеді, – деді Дана.</div>
</div>

<!-- scrollbar -->
<div class="a" style="left:1034px;top:80px;width:16px;height:637px;background:#f1f1f1"></div>
<svg style="left:1037px;top:86px" width="10" height="6"><path d="M5 0l5 6H0z" fill="#555"/></svg>
<svg style="left:1037px;top:706px" width="10" height="6"><path d="M0 0h10L5 6z" fill="#555"/></svg>
<div class="a" style="left:1036px;top:572px;width:12px;height:18px;background:#c0c0c0"></div>

</body></html>
